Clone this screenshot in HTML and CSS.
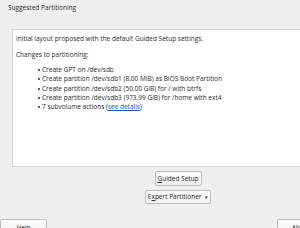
FILE: index.html
```html
<!DOCTYPE html>
<html>
<head>
<meta charset="utf-8">
<link rel="stylesheet" href="styles.css">
</head>
<body>
<div class="page">
  <div class="title">Suggested Partitioning</div>
  <div class="panel">
    <p class="line">Initial layout proposed with the default Guided Setup settings.</p>
    <p class="line gap">Changes to partitioning:</p>
    <ul class="changes">
      <li>Create GPT on /dev/sdb</li>
      <li>Create partition /dev/sdb1 (8.00 MiB) as BIOS Boot Partition</li>
      <li>Create partition /dev/sdb2 (50.00 GiB) for / with btrfs</li>
      <li>Create partition /dev/sdb3 (973.99 GiB) for /home with ext4</li>
      <li>7 subvolume actions (<span class="link">see details</span>)</li>
    </ul>
  </div>
  <div class="actions">
    <button class="btn guided"><u>G</u>uided Setup</button>
    <button class="btn expert">E<u>x</u>pert Partitioner <span class="arrow">▾</span></button>
  </div>
  <div class="bottom">
    <button class="btn wide">Help</button>
    <button class="btn wide">Abort</button>
  </div>
</div>
</body>
</html>
```
FILE: styles.css
```css
html, body {
  margin: 0;
  padding: 0;
  background: #efefef;
  overflow: hidden;
}
.page {
  width: 300px;
  height: 228px;
  overflow: hidden;
  font-family: "Open Sans", "Noto Sans", sans-serif;
  font-size: 6.5px;
  color: #2a2a2a;
}
.title {
  padding: 3px 0 0 8px;
  height: 29px;
  box-sizing: border-box;
  line-height: 9px;
}
.panel {
  margin-left: 12px;
  margin-right: -10px;
  height: 138px;
  box-sizing: border-box;
  background: #ffffff;
  border: 1px solid #d2d2d2;
  padding: 4px 3px;
}
.line {
  margin: 0;
  line-height: 9px;
}
.gap {
  margin-top: 7px;
}
.changes {
  margin: 6px 0 0 0;
  padding: 0 0 0 26px;
  list-style: none;
}
.changes li {
  line-height: 9.3px;
  position: relative;
}
.changes li::before {
  content: "";
  position: absolute;
  left: -4px;
  top: 4px;
  width: 2px;
  height: 2px;
  border-radius: 1px;
  background: #2a2a2a;
}
.link {
  color: #1a56c8;
  text-decoration: underline;
}
.actions {
  display: flex;
  flex-direction: column;
  align-items: center;
  gap: 4px;
  padding-left: 56px;
  margin-top: 4px;
}
.btn {
  font-family: inherit;
  font-size: 6.5px;
  color: #2a2a2a;
  background: linear-gradient(#fbfbfb, #f1f1f1);
  border: 1px solid #bdbdbd;
  border-radius: 2px;
  padding: 0;
  margin: 0;
  height: 15px;
  line-height: 13px;
  white-space: nowrap;
  text-align: center;
}
.guided {
  width: 47px;
}
.expert {
  width: 66px;
  height: 14px;
  line-height: 12px;
}
.arrow {
  font-size: 5px;
  margin-left: 2px;
}
.bottom {
  display: flex;
  justify-content: space-between;
  margin-top: 15px;
  margin-right: -24px;
}
.wide {
  width: 47px;
  height: 16px;
}
```
